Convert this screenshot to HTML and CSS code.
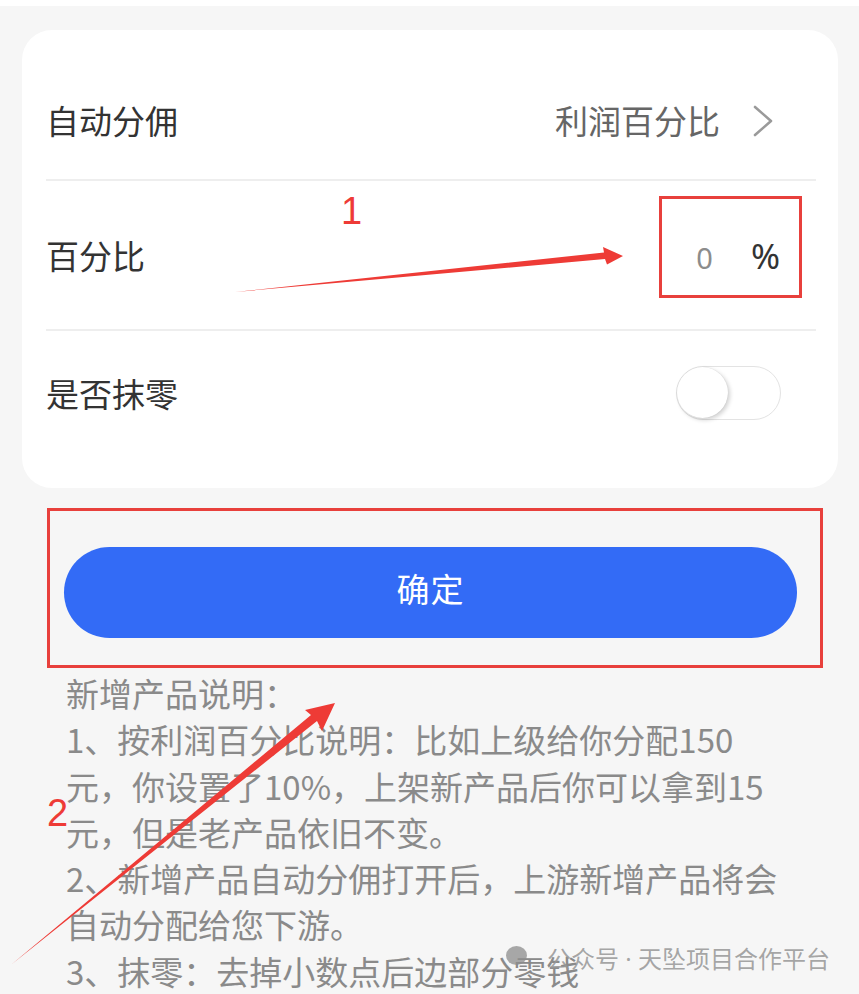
FILE: index.html
```html
<!DOCTYPE html>
<html lang="zh-CN">
<head>
<meta charset="utf-8">
<title>自动分佣设置</title>
<link rel="stylesheet" href="styles.css">
</head>
<body>
<div class="page">
  <div class="status-strip"></div>

  <section class="card">
    <div class="row row-first">
      <span class="label">自动分佣</span>
      <span class="value">
        利润百分比
        <svg class="chevron" width="24" height="34" viewBox="0 0 24 34"><polyline points="4,3 20,17 4,31" fill="none" stroke="#9a9a9a" stroke-width="2.6" stroke-linecap="round" stroke-linejoin="round"/></svg>
      </span>
    </div>
    <div class="row row-mid">
      <span class="label">百分比</span>
      <span class="percent">
        <span class="percent-input">0</span>
        <span class="percent-unit">%</span>
      </span>
    </div>
    <div class="row row-last">
      <span class="label">是否抹零</span>
      <span class="switch"><span class="knob"></span></span>
    </div>
  </section>

  <button class="confirm" type="button">确定</button>

  <p class="notes">新增产品说明：<br>1、按利润百分比说明：比如上级给你分配150<br>元，你设置了10%，上架新产品后你可以拿到15<br>元，但是老产品依旧不变。<br>2、新增产品自动分佣打开后，上游新增产品将会<br>自动分配给您下游。<br>3、抹零：去掉小数点后边部分零钱</p>

  <!-- callout marks drawn on top of the form -->
  <div class="mark-box mark-box-input"></div>
  <div class="mark-box mark-box-button"></div>
  <span class="mark-num mark-num-1">1</span>
  <span class="mark-num mark-num-2">2</span>
  <svg class="mark-arrows" width="859" height="994" viewBox="0 0 859 994">
    <polygon points="235,292 604,252.5 603,247 623,256 607,264.5 605,259" fill="#ee3b36"/>
    <polygon points="12,964 311,715 305,710 335,703 322,731 317,721" fill="#ee3b36"/>
  </svg>

  <div class="watermark">
    <span class="wm-icon"></span>
    <span class="wm-text">公众号<span class="wm-dot"> · </span>天坠项目合作平台</span>
  </div>
</div>
</body>
</html>
```

FILE: styles.css
```css
* {
  box-sizing: border-box;
}

html, body {
  margin: 0;
  padding: 0;
}

body {
  background: #f6f6f6;
  font-family: "Noto Sans CJK SC", "Noto Sans", sans-serif;
  color: #333;
}

.page {
  position: relative;
  width: 859px;
  height: 994px;
  overflow: hidden;
}

.status-strip {
  height: 6px;
  background: #ffffff;
}

/* settings card */
.card {
  margin: 24px 21px 0 22px;
  background: #ffffff;
  border-radius: 30px;
  padding: 32px 22px 33px 24px;
}

.row {
  display: flex;
  align-items: center;
  justify-content: space-between;
  padding-right: 36px;
  font-size: 33px;
  line-height: 1;
}

.row-first {
  height: 119px;
  border-bottom: 2px solid #eeeeee;
  padding-right: 41px;
}

.row-mid {
  height: 150px;
  border-bottom: 2px solid #eeeeee;
}

.row-last {
  height: 124px;
}

.label {
  color: #333;
}

.value {
  display: flex;
  align-items: center;
  color: #666;
}

.chevron {
  margin-left: 31px;
}

.percent {
  display: flex;
  align-items: baseline;
  font-family: "Noto Sans", "Noto Sans CJK SC", sans-serif;
}

.percent-input {
  color: #8c8c8c;
  font-size: 29px;
  margin-right: 38px;
}

.percent-unit {
  color: #333;
  font-size: 35px;
}

/* toggle switch, off state */
.switch {
  position: relative;
  width: 105px;
  height: 54px;
  border: 1.5px solid #e3e3e3;
  border-radius: 27px;
  background: #ffffff;
  margin-right: -1px;
}

.knob {
  position: absolute;
  left: 0;
  top: 0;
  width: 51px;
  height: 51px;
  border-radius: 50%;
  background: #ffffff;
  box-shadow: 2px 2px 4px rgba(0, 0, 0, 0.18), 0 0 1px rgba(0, 0, 0, 0.15);
}

/* primary action */
.confirm {
  display: block;
  width: 733px;
  height: 91px;
  margin: 59px 0 0 64px;
  padding: 0 0 10px;
  border: none;
  border-radius: 46px;
  background: #336bf6;
  color: #ffffff;
  font-family: "Noto Sans CJK SC", sans-serif;
  font-size: 33px;
  letter-spacing: 1px;
}

.notes {
  margin: 32px 0 0 66px;
  font-size: 33px;
  line-height: 46.3px;
  color: #8a8a8a;
  white-space: nowrap;
}

/* callouts */
.mark-box {
  position: absolute;
  border: 3px solid #e8403c;
}

.mark-box-input {
  left: 659px;
  top: 196px;
  width: 143px;
  height: 102px;
}

.mark-box-button {
  left: 47px;
  top: 508px;
  width: 776px;
  height: 160px;
}

.mark-num {
  position: absolute;
  color: #ee3b36;
  font-family: "Liberation Sans", sans-serif;
  font-size: 38px;
  line-height: 1;
}

.mark-num-1 {
  left: 341px;
  top: 192px;
}

.mark-num-2 {
  left: 47px;
  top: 794px;
}

.mark-arrows {
  position: absolute;
  left: 0;
  top: 0;
  pointer-events: none;
}

/* channel watermark */
.watermark {
  position: absolute;
  left: 506px;
  top: 943px;
  display: flex;
  align-items: center;
  color: rgba(150, 150, 150, 0.85);
  font-size: 24px;
  line-height: 30px;
}

.wm-dot {
  font-family: "Noto Sans", sans-serif;
}

.wm-icon {
  width: 21px;
  height: 19px;
  border-radius: 50%;
  background: rgba(140, 140, 140, 0.75);
  margin-right: 20px;
  margin-top: -6px;
}
```
